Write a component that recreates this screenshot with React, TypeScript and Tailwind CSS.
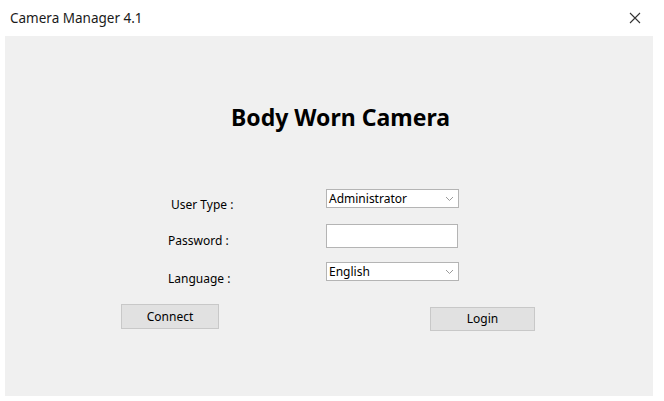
import React from "react";

const font = { fontFamily: '"Noto Sans", "Segoe UI", sans-serif' };

function Chevron() {
  return (
    <svg width="9" height="6" viewBox="0 0 9 6" className="shrink-0">
      <path d="M1 1 L4.5 4.5 L8 1" fill="none" stroke="#9a9a9a" strokeWidth="1" />
    </svg>
  );
}

function Combo({ value }: { value: string }) {
  return (
    <div className="w-[133px] h-[19px] bg-white border border-[#b4b4b4] flex items-center pl-[2px] pr-[4px] justify-between">
      <span className="text-[12px] leading-[16px] text-black">{value}</span>
      <Chevron />
    </div>
  );
}

export default function App() {
  return (
    <div className="w-[664px] h-[401px] bg-white flex flex-col" style={font}>
      <div className="h-[36px] flex items-center justify-between pl-[10px] pr-[23px]">
        <span className="text-[13.5px] leading-[18px] text-[#1a1a1a]">Camera Manager 4.1</span>
        <svg width="12" height="12" viewBox="0 0 12 12">
          <path d="M1 1 L11 11 M11 1 L1 11" stroke="#333" strokeWidth="1.1" />
        </svg>
      </div>
      <div className="ml-[5px] w-[648px] h-[360px] bg-[#f0f0f0] flex flex-col">
        <div className="pt-[66px] pl-[226px]">
          <div className="text-[23px] leading-[30px] font-bold text-black">Body Worn Camera</div>
        </div>
        <div className="mt-[57px] h-[19px] flex items-start pl-[166px]">
          <span className="w-[155px] mt-[8px] text-[12px] leading-[16px] text-black">User Type :</span>
          <Combo value="Administrator" />
        </div>
        <div className="mt-[16px] h-[24px] flex items-start pl-[163px]">
          <span className="w-[158px] mt-[9px] text-[12px] leading-[16px] text-black">Password :</span>
          <div className="w-[132px] h-[24px] bg-white border border-[#b4b4b4]" />
        </div>
        <div className="mt-[14px] h-[20px] flex items-start pl-[163px]">
          <span className="w-[158px] mt-[9px] text-[12px] leading-[16px] text-black">Language :</span>
          <Combo value="English" />
        </div>
        <div className="mt-[22px] flex items-start pl-[116px]">
          <div className="w-[98px] h-[25px] bg-[#e1e1e1] border border-[#c8c8c8] flex items-center justify-center text-[12px] text-black">
            Connect
          </div>
          <div className="ml-[211px] mt-[3px] w-[105px] h-[24px] bg-[#e1e1e1] border border-[#c8c8c8] flex items-center justify-center text-[12px] text-black">
            Login
          </div>
        </div>
      </div>
    </div>
  );
}
